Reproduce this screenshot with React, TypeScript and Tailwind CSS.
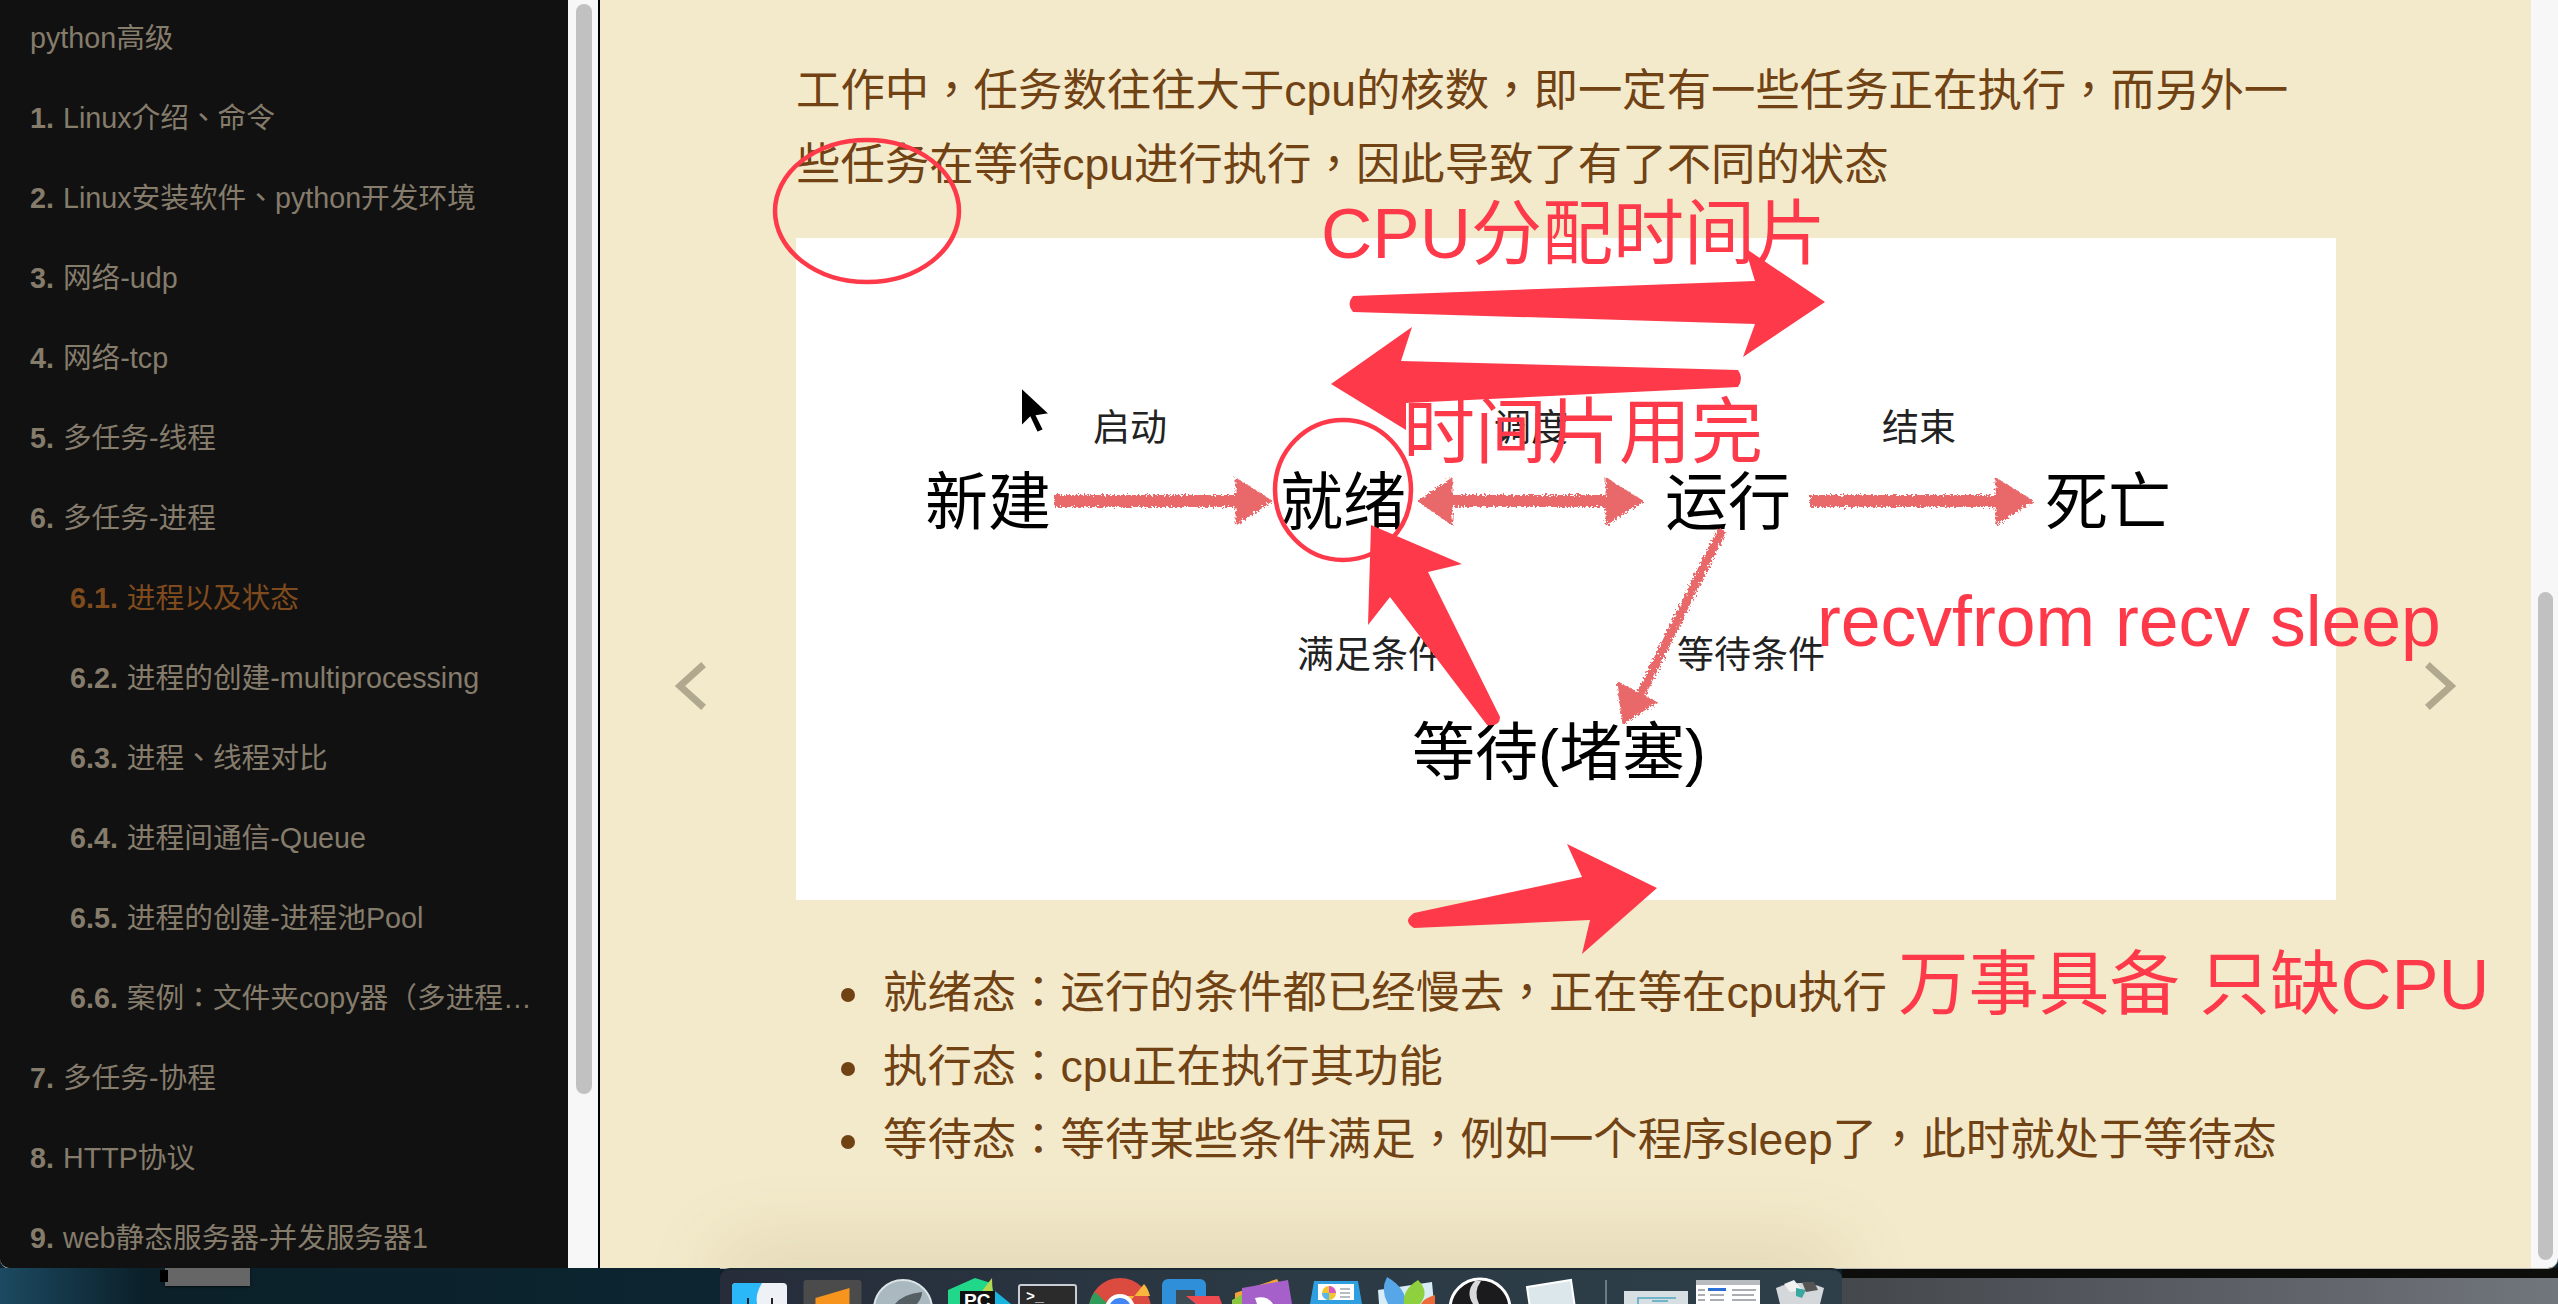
const COMMA = "\uFF0C";
const COLON = "\uFF1A";
const DUN = "\u3001";

const tocItems = [
  { num: "", label: "python高级" },
  { num: "1.", label: <>Linux介绍<Punct>{DUN}</Punct>命令</> },
  { num: "2.", label: <>Linux安装软件<Punct>{DUN}</Punct>python开发环境</> },
  { num: "3.", label: "网络-udp" },
  { num: "4.", label: "网络-tcp" },
  { num: "5.", label: "多任务-线程" },
  { num: "6.", label: "多任务-进程" },
  { num: "6.1.", label: "进程以及状态", sub: true, active: true },
  { num: "6.2.", label: "进程的创建-multiprocessing", sub: true },
  { num: "6.3.", label: <>进程<Punct>{DUN}</Punct>线程对比</>, sub: true },
  { num: "6.4.", label: "进程间通信-Queue", sub: true },
  { num: "6.5.", label: "进程的创建-进程池Pool", sub: true },
  { num: "6.6.", label: <>案例<Punct>{COLON}</Punct>文件夹copy器<Punct>（</Punct>多进程版<Punct>）</Punct></>, sub: true, long: true },
  { num: "7.", label: "多任务-协程" },
  { num: "8.", label: "HTTP协议" },
  { num: "9.", label: "web静态服务器-并发服务器1" },
];

function Punct({ children }: { children: string }) {
  return <span className="font-['Noto_Sans_CJK_TC',sans-serif] leading-none">{children}</span>;
}

function Sidebar() {
  return (
    <aside className="h-full w-[568px] shrink-0 overflow-hidden bg-[#111111]">
      <ul className="-mt-[1px] text-[28.7px] text-[#857c6c]">
        {tocItems.map((item, i) => (
          <li
            key={i}
            className={`flex h-[80px] items-center gap-[9px] whitespace-nowrap pr-[30px] ${item.sub ? "pl-[70px]" : "pl-[30px]"} ${item.active ? "text-[#7f4b1e]" : ""}`}
          >
            {item.num && <b className="shrink-0 font-bold">{item.num}</b>}
            <span className={item.long ? "truncate" : ""}>{item.label}</span>
          </li>
        ))}
      </ul>
    </aside>
  );
}

function Scrollbar({ className, thumb }: { className: string; thumb: string }) {
  return (
    <div className={`h-full shrink-0 bg-[#f7f7f7] ${className}`}>
      <div className={`rounded-full bg-[#c1c1c1] ${thumb}`} />
    </div>
  );
}

function DiagramLabels() {
  return (
    <>
      <span className="absolute left-[129px] top-[233px] text-[63px] leading-none">新建</span>
      <span className="absolute left-[484px] top-[233px] text-[63px] leading-none">就绪</span>
      <span className="absolute left-[869px] top-[233px] text-[63px] leading-none">运行</span>
      <span className="absolute left-[1249px] top-[233px] text-[63px] leading-none">死亡</span>
      <span className="absolute left-[616px] top-[483px] text-[63px] leading-none">等待(堵塞)</span>
      <span className="absolute left-[297px] top-[172px] text-[37px] leading-none text-[#222]">启动</span>
      <span className="absolute left-[698px] top-[172px] text-[37px] leading-none text-[#222]">调度</span>
      <span className="absolute left-[1086px] top-[172px] text-[37px] leading-none text-[#222]">结束</span>
      <span className="absolute left-[501px] top-[399px] text-[37px] leading-none text-[#222]">满足条件</span>
      <span className="absolute left-[881px] top-[399px] text-[37px] leading-none text-[#222]">等待条件</span>
    </>
  );
}

// hand drawn marks on top of the page, in page coordinates
function Annotations() {
  return (
    <>
      <svg className="absolute left-0 top-0 h-[1304px] w-[2558px]" viewBox="0 0 2558 1304" fill="none">
        <defs>
          <filter id="crayon" x="-10%" y="-50%" width="120%" height="200%">
            <feTurbulence type="fractalNoise" baseFrequency="0.45" numOctaves="2" seed="4" />
            <feDisplacementMap in="SourceGraphic" scale="7" />
          </filter>
        </defs>
        <g filter="url(#crayon)" fill="#e9686a" stroke="#e9686a">
          <path d="M1054 501H1240" strokeWidth="12" />
          <path d="M1236 478L1272 501L1236 525Z" />
          <path d="M1450 501H1610" strokeWidth="12" />
          <path d="M1452 478L1418 501L1452 525Z" />
          <path d="M1606 478L1643 501L1606 525Z" />
          <path d="M1810 501H2000" strokeWidth="12" />
          <path d="M1996 478L2033 501L1996 525Z" />
          <path d="M1722 530L1638 700" strokeWidth="9" />
          <path d="M1617 682L1657 702L1623 724Z" />
        </g>
        <ellipse cx="867" cy="211" rx="92" ry="71" stroke="#fe3a4a" strokeWidth="4.5" />
        <ellipse cx="1343" cy="490" rx="68" ry="70" stroke="#fe3a4a" strokeWidth="4.5" />
        <path
          d="M1353 296L1755 281L1745 248L1825 302L1743 357L1755 324L1353 312Q1346 304 1353 296Z"
          fill="#fe3a4a"
        />
        <path
          d="M1738 370L1401 361L1412 327L1331 384L1406 430L1406 403L1738 387Q1744 378 1738 370Z"
          fill="#fe3a4a"
        />
        <path
          d="M1371 525L1462 564L1428 572L1500 717Q1500 727 1487 725L1390 597L1368 625Z"
          fill="#fe3a4a"
        />
        <path
          d="M1414 913L1582 877L1567 844L1657 888L1582 954L1590 920L1414 928Q1402 921 1414 913Z"
          fill="#fe3a4a"
        />
        <path
          d="M1021 387V427L1030 418L1037 433L1044 430L1037 416L1050 414Z"
          fill="#000"
          stroke="#fff"
          strokeWidth="2"
        />
      </svg>
      <span className="absolute left-[1321px] top-[198px] whitespace-nowrap text-[71px] leading-none text-[#fe3a4a]">CPU分配时间片</span>
      <span className="absolute left-[1403px] top-[396px] whitespace-nowrap text-[72px] leading-none text-[#fe3a4a]">时间片用完</span>
      <span className="absolute left-[1817px] top-[586px] whitespace-nowrap text-[71.5px] leading-none text-[#fe3a4a]">recvfrom recv sleep</span>
      <span className="absolute left-[1898px] top-[950px] whitespace-nowrap text-[70.5px] leading-none text-[#fe3a4a]">万事具备 只缺CPU</span>
    </>
  );
}

function Chevron({ className, d }: { className: string; d: string }) {
  return (
    <svg className={`absolute h-[48px] w-[32px] ${className}`} viewBox="0 0 32 48" fill="none">
      <path d={d} stroke="#b0a88f" strokeWidth="7" strokeLinecap="square" />
    </svg>
  );
}

const bullet =
  "relative before:absolute before:left-[-42px] before:top-[32px] before:size-[14px] before:rounded-full before:bg-[#704214]";

function Content() {
  return (
    <main className="relative h-full min-w-0 flex-1 overflow-hidden bg-[#f3eacb] pl-[196px] pt-[54px] text-[44.4px] leading-[74px] text-[#704214]">
      <p className="whitespace-nowrap">
        工作中<Punct>{COMMA}</Punct>任务数往往大于cpu的核数<Punct>{COMMA}</Punct>即一定有一些任务正在执行<Punct>{COMMA}</Punct>而另外一
        <br />
        些任务在等待cpu进行执行<Punct>{COMMA}</Punct>因此导致了有了不同的状态
      </p>
      <div className="relative mt-[36px] h-[662px] w-[1540px] bg-white text-black">
        <DiagramLabels />
      </div>
      <ul className="ml-[87px] mt-[56px] whitespace-nowrap leading-[73.5px]">
        <li className={bullet}>就绪态<Punct>{COLON}</Punct>运行的条件都已经慢去<Punct>{COMMA}</Punct>正在等在cpu执行</li>
        <li className={bullet}>执行态<Punct>{COLON}</Punct>cpu正在执行其功能</li>
        <li className={bullet}>等待态<Punct>{COLON}</Punct>等待某些条件满足<Punct>{COMMA}</Punct>例如一个程序sleep了<Punct>{COMMA}</Punct>此时就处于等待态</li>
      </ul>
      <Chevron className="left-[74px] top-[662px]" d="M27 5L6 24L27 43" />
      <Chevron className="right-[74px] top-[662px]" d="M5 5L26 24L5 43" />
    </main>
  );
}

function DockIcon({ children, w = 60 }: { children: React.ReactNode; w?: number }) {
  return (
    <svg className="shrink-0 overflow-visible" width={w} height="36" viewBox={`0 0 ${w} 36`}>
      {children}
    </svg>
  );
}

function Dock() {
  return (
    <div className="relative z-10 flex h-full w-[1122px] shrink-0 overflow-hidden rounded-t-[10px] border-t-2 border-[#1b2a31] bg-gradient-to-r from-[#262c3a] via-[#2b3a44] to-[#2e3f49] pl-[10px]">
      <div className="-mt-[2px] flex gap-[11.5px]">
        <DockIcon>
          <rect x="2" y="15" width="55" height="30" rx="4" fill="#eef1f5" />
          <path d="M6 15H32Q25 26 27 36H2V19Q2 15 6 15Z" fill="#2bb8f8" />
          <rect x="17" y="30" width="2" height="6" fill="#222" />
          <rect x="41" y="30" width="2" height="6" fill="#222" />
        </DockIcon>
        <DockIcon>
          <rect x="1.5" y="12" width="58" height="40" rx="3" fill="#4b4b4b" />
          <path d="M13.5 30L47.5 20V36H13.5Z" fill="#f7941d" />
        </DockIcon>
        <DockIcon>
          <circle cx="30" cy="41" r="29" fill="#a9b9bf" stroke="#dbe4e7" strokeWidth="2" />
          <path d="M49 24Q30 26 22 36H44Q49 30 49 24Z" fill="#555e63" />
        </DockIcon>
        <DockIcon>
          <path d="M3 22L30 10L46 15L52 36H3Z" fill="#21d789" />
          <path d="M37 23L47 10L48 36Z" fill="#b4d84f" />
          <path d="M50 23L66 36H50Z" fill="#19b4e0" />
          <rect x="15" y="23" width="35" height="13" fill="#111" />
          <text x="19" y="39" fill="#fff" fontSize="19" fontWeight="700" fontFamily="Liberation Sans">PC</text>
        </DockIcon>
        <DockIcon>
          <rect x="3" y="17" width="57" height="24" rx="2" fill="#2b2b2b" stroke="#c9ced4" strokeWidth="2" />
          <text x="10" y="33" fill="#fff" fontSize="15" fontWeight="700" fontFamily="Liberation Mono">&gt;_</text>
        </DockIcon>
        <DockIcon>
          <circle cx="32" cy="41" r="31" fill="#db4b3f" />
          <path d="M32 28H62Q60 20 56 16L40 36Z" fill="#f6b73c" />
          <path d="M1 38Q2 30 7 24L20 36H1Z" fill="#2f9d59" />
          <circle cx="32" cy="41" r="15" fill="#fff" />
          <circle cx="32" cy="41" r="11" fill="#4285f4" />
        </DockIcon>
        <DockIcon>
          <rect x="3" y="11" width="44" height="40" rx="6" fill="#2f8fd8" />
          <rect x="17" y="22" width="19" height="20" fill="#3d4b55" />
          <path d="M27 28H60L63 36H37Z" fill="#ee4a52" />
        </DockIcon>
        <DockIcon>
          <path d="M4 25L46 11L50 18L10 36H4Z" fill="#f2a33a" />
          <path d="M1 32L12 26L12 36H1Z" fill="#8cc63f" />
          <path d="M11 20L57 12L61 36H11Z" fill="#a660c9" />
          <path d="M24 30Q36 27 42 36H26Z" fill="#fff" />
        </DockIcon>
        <DockIcon>
          <path d="M12 13H56L60 36H8Z" fill="#2f9fe0" />
          <rect x="16" y="16" width="36" height="16" fill="#fff" />
          <circle cx="27" cy="25" r="7" fill="#f0c52e" />
          <path d="M27 25V18A7 7 0 0 1 34 25Z" fill="#d958c8" />
          <path d="M27 25H20A7 7 0 0 0 27 32Z" fill="#59b7e8" />
          <rect x="38" y="20" width="10" height="2" fill="#b5bcc2" />
          <rect x="38" y="24" width="10" height="2" fill="#b5bcc2" />
          <rect x="38" y="28" width="10" height="2" fill="#b5bcc2" />
        </DockIcon>
        <DockIcon>
          <path d="M4 22L58 14L60 36H5Z" fill="#d7ecf4" />
          <path d="M13 9Q32 20 32 36H14Q6 22 13 9Z" fill="#57a6e8" />
          <path d="M44 12Q56 24 46 36H30Q28 22 44 12Z" fill="#8fd03f" />
          <path d="M61 27V36H47Q50 30 61 27Z" fill="#ef6a3a" />
        </DockIcon>
        <DockIcon>
          <circle cx="35" cy="41" r="30" fill="#1b1b1d" stroke="#fff" strokeWidth="3" />
          <path d="M30 13Q20 24 28 36H34Q28 24 36 13Z" fill="#d9d9d9" />
        </DockIcon>
        <DockIcon>
          <path d="M10 19L54 12L58 40H13Z" fill="#dce7eb" stroke="#fff" strokeWidth="2" />
        </DockIcon>
      </div>
      <div className="ml-[28px] mt-[10px] h-full w-[2px] shrink-0 bg-[#6b7c85]" />
      <div className="-mt-[2px] ml-[17px] flex gap-[8px]">
        <DockIcon w={64}>
          <rect y="23" width="64" height="20" fill="#d8dfe2" />
          <path d="M14 36V30H28M28 30H52M28 33H44" stroke="#72b4c8" strokeWidth="2" fill="none" />
        </DockIcon>
        <DockIcon w={64}>
          <rect y="12" width="64" height="30" fill="#fff" />
          <rect y="12" width="64" height="5" fill="#b8bcc0" />
          <rect x="12" y="20" width="18" height="3" fill="#2b6fd6" />
          <path d="M2 22H9M2 27H9M2 32H9M14 27H28M14 32H28M36 22H60M36 27H58M36 32H60" stroke="#8e9398" strokeWidth="1.5" />
        </DockIcon>
        <DockIcon w={56}>
          <path d="M8 20Q32 10 56 20L52 36H12Z" fill="#d5d8da" />
          <path d="M16 16L26 12L34 22L22 24Z" fill="#f2f2f2" />
          <path d="M28 20L38 22L34 30L28 28Z" fill="#3aa7a0" />
          <path d="M34 14L46 14L50 22L38 24Z" fill="#555" />
        </DockIcon>
      </div>
    </div>
  );
}

export default function App() {
  return (
    <div className="relative h-[1304px] w-[2558px] overflow-hidden bg-[#0b2029] font-['Liberation_Sans','Noto_Sans_CJK_SC',sans-serif]">
      <div className="relative flex h-[1268px] w-full overflow-hidden rounded-b-[10px] shadow-[0_1px_0_#b5b5b5]">
        <Sidebar />
        <Scrollbar className="w-[30px] pl-[8px]" thumb="mt-[4px] h-[1090px] w-[16px]" />
        <div className="h-full w-[2px] shrink-0 bg-black" />
        <Content />
        <Scrollbar className="w-[27px] pl-[7px]" thumb="mt-[592px] h-[668px] w-[15px]" />
        <Annotations />
        {/* shadow the dock casts on the window */}
        <div className="absolute bottom-[-40px] left-[720px] h-[60px] w-[1122px] bg-[#5a4a10] opacity-[0.14] blur-[40px]" />
      </div>
      <div className="flex h-[36px] w-full">
        <div className="relative h-full w-[720px] shrink-0 bg-gradient-to-r from-[#1c4a62] via-[#0b2029] via-20% to-[#0c2530]">
          <div className="absolute left-[165px] top-0 h-[18px] w-[85px] bg-[#666666] shadow-[0_1px_2px_rgba(0,0,0,0.6)]" />
          <div className="absolute left-[160px] top-[2px] h-[12px] w-[8px] bg-black" />
        </div>
        <Dock />
        <div className="h-full flex-1 border-t-[10px] border-[#0d0d0c] bg-gradient-to-r from-[#44474c] to-[#71757c]" />
      </div>
    </div>
  );
}
